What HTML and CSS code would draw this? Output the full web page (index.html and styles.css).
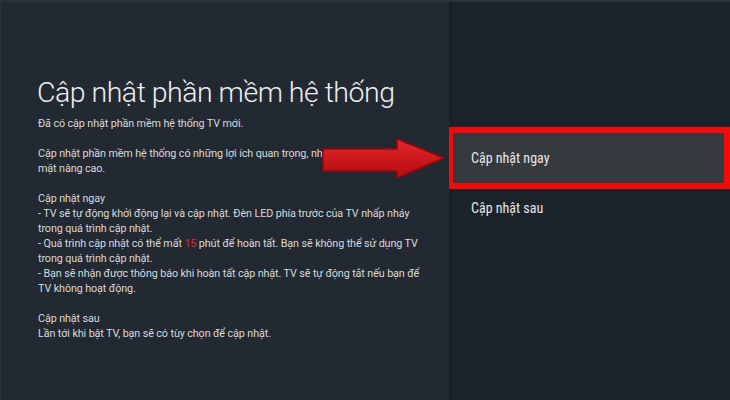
FILE: index.html
```html
<!DOCTYPE html>
<html>
<head>
    <title>Cập nhật phần mềm hệ thống</title>
    <link rel="stylesheet" href="styles.css">
</head>
<body>
    <div class="screen">
        <div class="info">
            <h1>Cập nhật phần mềm hệ thống</h1>
            <p>Đã có cập nhật phần mềm hệ thống TV mới.</p>
            <p>Cập nhật phần mềm hệ thống có những lợi ích quan trọng, như tính năng bảo<br>mặt nâng cao.</p>
            <p>Cập nhật ngay<br>
                - TV sẽ tự động khởi động lại và cập nhật. Đèn LED phía trước của TV nhấp nháy<br>trong quá trình cập nhật.<br>
                - Quá trình cập nhật có thể mất <span class="hl">15</span> phút để hoàn tất. Bạn sẽ không thể sử dụng TV<br>trong quá trình cập nhật.<br>
                - Bạn sẽ nhận được thông báo khi hoàn tất cập nhật. TV sẽ tự động tắt nếu bạn để<br>TV không hoạt động.</p>
            <p>Cập nhật sau<br>Lần tới khi bật TV, bạn sẽ có tùy chọn để cập nhật.</p>

            <!-- arrow pointing at the selected option -->
            <svg class="arrow" width="124" height="42" viewBox="0 0 124 42">
                <defs>
                    <linearGradient id="arrowFill" x1="0" y1="0" x2="0" y2="1">
                        <stop offset="0" stop-color="#e8262a"/>
                        <stop offset="1" stop-color="#b10d10"/>
                    </linearGradient>
                </defs>
                <path d="M1 11 L75 11 L75 1 L122 20 L75 40 L75 33 L1 33 Z" fill="url(#arrowFill)" stroke="#8e0a0c" stroke-width="1.5" stroke-linejoin="round"/>
            </svg>
        </div>

        <div class="menu">
            <div class="menu-item selected">Cập nhật ngay</div>
            <div class="menu-item">Cập nhật sau</div>
        </div>
    </div>
</body>
</html>
```

FILE: styles.css
```css
body {
    margin: 0;
    padding: 0;
    font-family: Roboto, "Liberation Sans", sans-serif;
    background-color: #1c2229;
}

.screen {
    display: flex;
    width: 730px;
    height: 400px;
    overflow: hidden;
    border-top: 2px solid #2c323a;
    box-sizing: border-box;
}

.info {
    position: relative;
    width: 449px;
    padding: 0 0 0 37px;
    box-sizing: border-box;
    background-color: #222932;
    border-left: 1px solid #2c323a;
    color: #d9dadb;
    font-size: 10.75px;
    letter-spacing: -0.1px;
    line-height: 15px;
}

.info h1 {
    margin: 71px 0 3px -1px;
    font-size: 28.5px;
    font-weight: 300;
    letter-spacing: -0.5px;
    line-height: 40px;
    color: #eeeff0;
}

.info p {
    margin: 0 0 15px 0;
}

.hl {
    color: #e3262b;
}

.arrow {
    position: absolute;
    left: 321px;
    top: 136px;
}

.menu {
    flex: 1;
    padding-top: 131px;
    border-left: 4px solid #1a1f1f;
}

.menu-item {
    height: 50px;
    line-height: 50px;
    margin-right: 6px;
    padding-left: 18px;
    font-family: "Roboto Condensed", "Liberation Sans Narrow", "DejaVu Sans Condensed", Roboto, sans-serif;
    font-size: 14px;
    color: #e6e7e8;
}

.menu-item.selected {
    background-color: #353a3e;
    outline: 6px solid #f40a0a;
}
```
